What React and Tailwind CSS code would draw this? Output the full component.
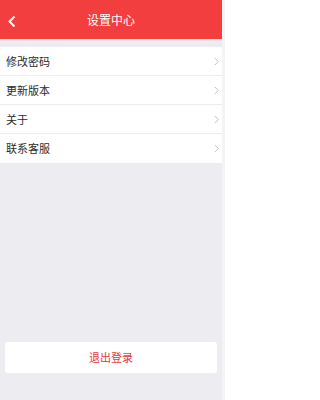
import React from "react";

const items = ["修改密码", "更新版本", "关于", "联系客服"];

const Chevron = () => (
  <svg width="5" height="9" viewBox="0 0 5 9" fill="none">
    <path d="M0.8 1l3.5 3.5L0.8 8" stroke="#c2c2c6" strokeWidth="1" />
  </svg>
);

const App = () => {
  return (
    <div
      className="flex h-[400px] w-[225px] overflow-hidden bg-[#f4f4f6]"
      style={{ fontFamily: '"Noto Sans CJK SC", "Noto Sans", sans-serif' }}
    >
      <div className="flex w-[222px] flex-col bg-[#ececf1]">
        {/* header */}
        <div className="relative flex h-[39px] items-center justify-center bg-[#f23e3e]">
          <button className="absolute left-[6px] top-[14px] p-[1px]">
            <svg width="9" height="13" viewBox="0 0 9 13" fill="none">
              <path d="M7.5 1.5L2.5 6.5l5 5" stroke="#fff" strokeWidth="2" />
            </svg>
          </button>
          <span className="text-[12px] text-white">设置中心</span>
        </div>

        {/* list */}
        <div className="mt-[8px] bg-white">
          {items.map((label, i) => (
            <div
              key={i}
              className={
                "flex h-[29px] items-center justify-between pl-[6px] pr-[3px] " +
                (i < items.length - 1 ? "border-b border-[#eeeeee]" : "")
              }
            >
              <span className="text-[11px] text-[#2b2b2b]">{label}</span>
              <Chevron />
            </div>
          ))}
        </div>

        <div className="flex-1" />

        {/* logout */}
        <div className="mb-[27px] px-[5px]">
          <button className="flex h-[31px] w-full items-center justify-center rounded-[3px] bg-white text-[11px] text-[#e23b3b]">
            退出登录
          </button>
        </div>
      </div>
    </div>
  );
};

export default App;
